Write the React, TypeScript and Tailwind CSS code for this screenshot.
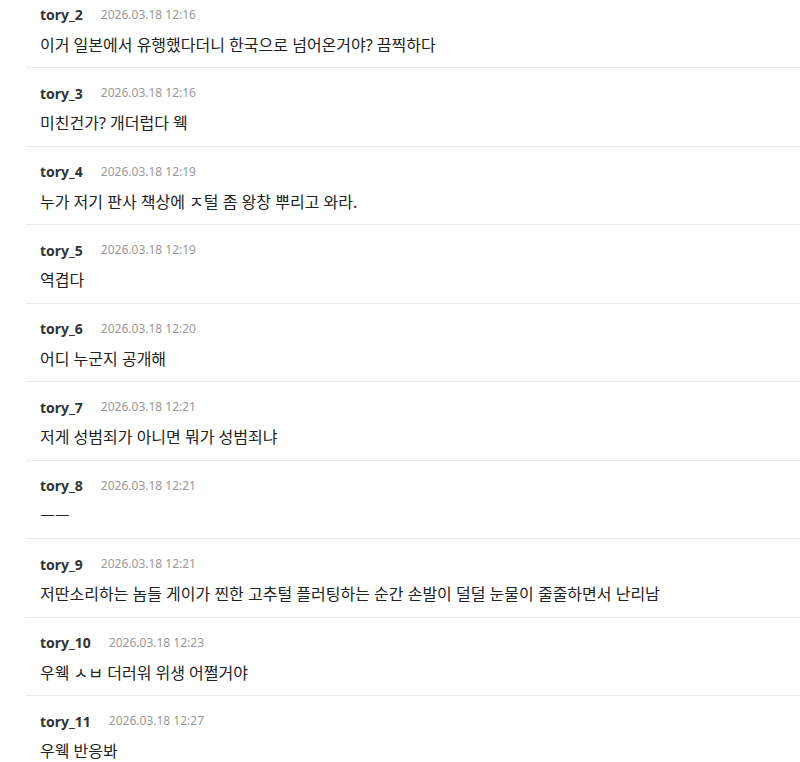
import React from "react";

const comments = [
  { name: "tory_2", date: "2026.03.18 12:16", text: "이거 일본에서 유행했다더니 한국으로 넘어온거야? 끔찍하다" },
  { name: "tory_3", date: "2026.03.18 12:16", text: "미친건가? 개더럽다 웩" },
  { name: "tory_4", date: "2026.03.18 12:19", text: "누가 저기 판사 책상에 ㅈ털 좀 왕창 뿌리고 와라." },
  { name: "tory_5", date: "2026.03.18 12:19", text: "역겹다" },
  { name: "tory_6", date: "2026.03.18 12:20", text: "어디 누군지 공개해" },
  { name: "tory_7", date: "2026.03.18 12:21", text: "저게 성범죄가 아니면 뭐가 성범죄냐" },
  { name: "tory_8", date: "2026.03.18 12:21", text: "ㅡㅡ" },
  { name: "tory_9", date: "2026.03.18 12:21", text: "저딴소리하는 놈들 게이가 찐한 고추털 플러팅하는 순간 손발이 덜덜 눈물이 줄줄하면서 난리남" },
  { name: "tory_10", date: "2026.03.18 12:23", text: "우웩 ㅅㅂ 더러워 위생 어쩔거야" },
  { name: "tory_11", date: "2026.03.18 12:27", text: "우웩 반응봐" },
];

export default function App() {
  return (
    <div
      className="w-[800px] h-[762px] overflow-hidden bg-white"
      style={{ fontFamily: '"Noto Sans", "Noto Sans CJK KR", sans-serif' }}
    >
      <ul className="ml-[26px] -mt-[10.5px]">
        {comments.map((c) => (
          <li key={c.name} className="pl-[14px] pt-[15px] pb-[12.5px] border-b border-[#ebebeb]">
            <div className="flex items-center h-5">
              <span className="text-[14px] font-bold text-[#333333]">{c.name}</span>
              <span className="ml-[18px] text-[12px] text-[#999999]">{c.date}</span>
            </div>
            <p className="mt-[10px] h-5 leading-5 text-[16px] text-[#222222] whitespace-nowrap">{c.text}</p>
          </li>
        ))}
      </ul>
    </div>
  );
}
